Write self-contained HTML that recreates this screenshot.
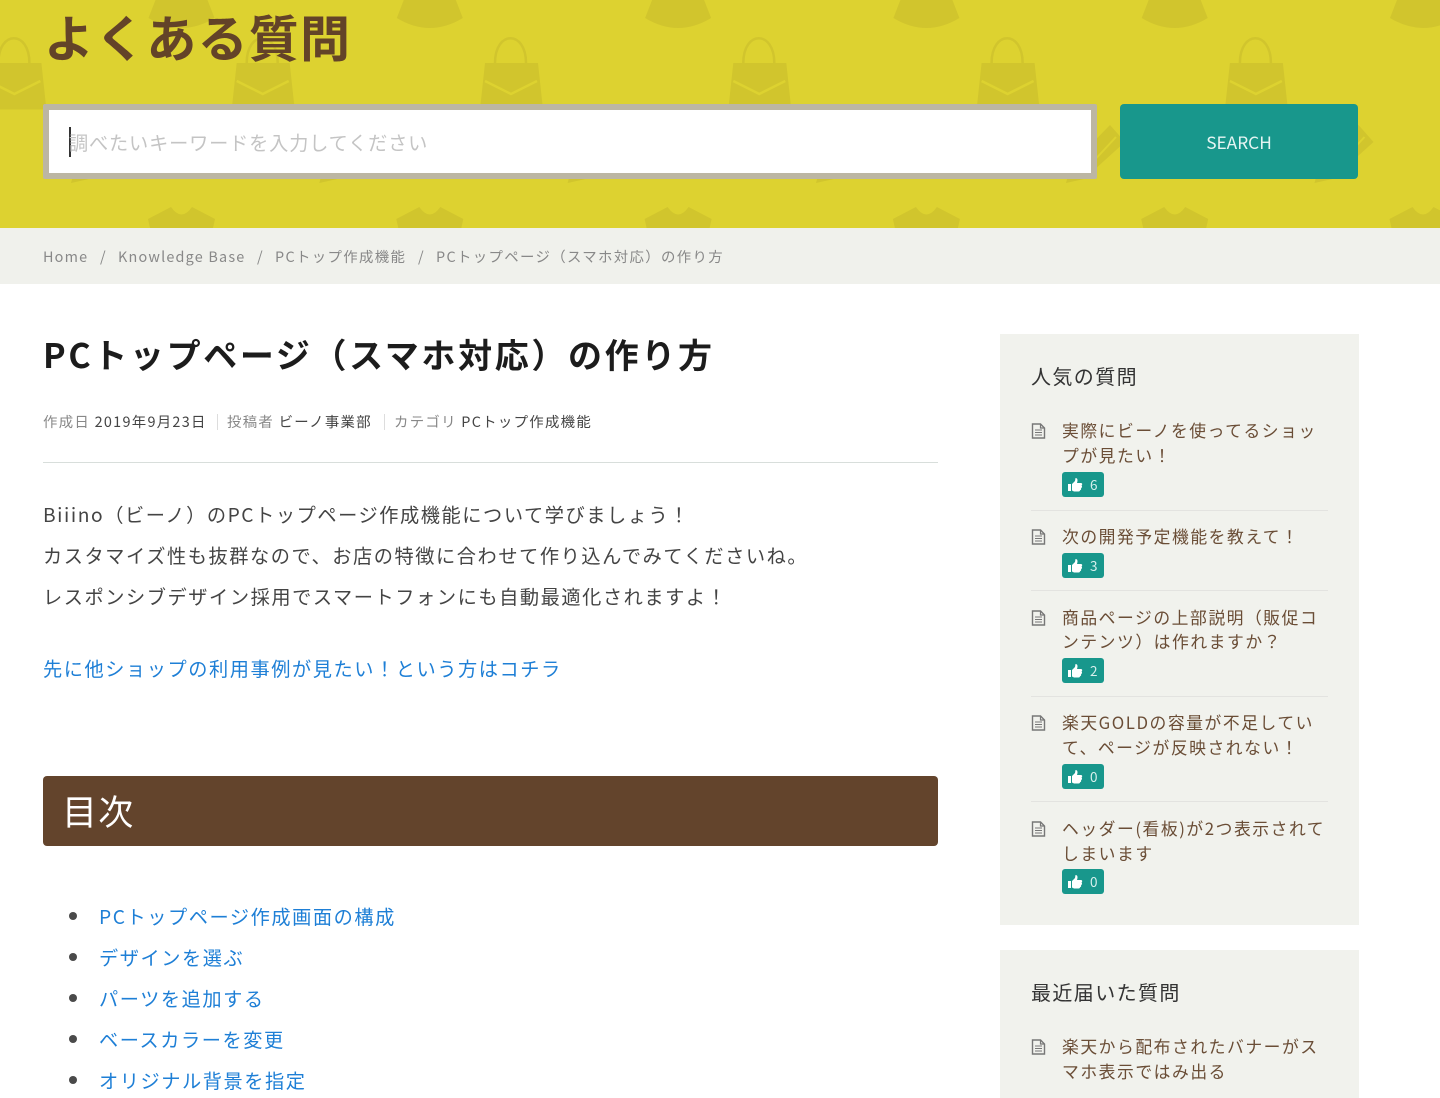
<!DOCTYPE html>
<html lang="ja"><head><meta charset="utf-8"><title>PCトップページ（スマホ対応）の作り方</title>
<style>
html,body{margin:0;padding:0;background:#fff}
body{width:1440px;height:1098px;overflow:hidden;position:relative;font-family:"Liberation Sans","Noto Sans CJK JP",sans-serif}
#w{position:absolute;left:0;top:0;width:1440px;height:1098px;overflow:hidden;filter:blur(.35px)}
.t{position:absolute;white-space:nowrap;font-family:"Noto Sans CJK JP",sans-serif;line-height:1.2}
.b{position:absolute}
.main{font-size:19.2px;letter-spacing:1.57px;color:#444}
.a{font-size:19.2px;letter-spacing:1.56px;color:#1e7fd6}
.q{font-size:16.8px;letter-spacing:1.55px;color:#6a4d36}
.meta{font-size:14.4px;letter-spacing:1.3px;color:#888}
.meta span{color:#444}
.crumb{font-size:14.4px;letter-spacing:1.36px;color:#888}
.badge{position:absolute;left:1062px;width:42px;height:25px;background:#18978c;border-radius:3px;color:#d8f0ed;font:13.5px "Noto Sans CJK JP",sans-serif;line-height:24px}
.badge svg{position:absolute;left:6px;top:6px}
.badge i{position:absolute;left:28px;font-style:normal}
.doc{position:absolute;left:1031px}
.dot{position:absolute;left:69px;width:8px;height:8px;border-radius:50%;background:#4a4a4a}
.sep{position:absolute;width:1px;height:16px;background:#ddd;top:414px}
.hr{position:absolute;left:1031px;width:297px;height:1px;background:#e3e3e0}
</style></head><body><div id="w">

<svg class="b" style="left:0;top:0" width="1440" height="228" viewBox="0 0 1440 228" xmlns="http://www.w3.org/2000/svg">
<defs>
<g id="bag">
<path d="M-26 63H27L32 109.500H-31Z" fill="#d1c52d"/>
<path d="M-16 63C-16 30 15 30 15 63" fill="none" stroke="#d1c52d" stroke-width="2.5"/>
<path d="M-26 81L0 94L26 81" fill="none" stroke="#ddd230" stroke-width="2.5"/>
</g>
<g id="top">
<path d="M-26 0H26L33 18Q0 38 -33 18Z" fill="#d1c52d"/>
<path d="M-33.500 219L-10.500 207Q0 222 10.500 207L33.500 219L31.500 228H-31.500Z" fill="#d1c52d"/>
</g>
<g id="pen">
<path d="M0 0L15 17L-26 54L-44 58L-39 40Z" fill="#d1c52d"/>
<path d="M6 12L-20 40" fill="none" stroke="#ddd230" stroke-width="2"/>
</g>
</defs>
<rect width="1440" height="228" fill="#ddd230"/>
<use href="#bag" x="14.4"/><use href="#bag" x="262.700"/><use href="#bag" x="511"/><use href="#bag" x="759.300"/><use href="#bag" x="1007.600"/><use href="#bag" x="1255.900"/>
<use href="#top" x="181.500"/><use href="#top" x="429.800"/><use href="#top" x="678.100"/><use href="#top" x="926.400"/><use href="#top" x="1174.700"/><use href="#top" x="1423"/>
<use href="#pen" x="115" y="125"/><use href="#pen" x="363.300" y="125"/><use href="#pen" x="611.600" y="125"/><use href="#pen" x="860" y="125"/><use href="#pen" x="1110" y="125"/><use href="#pen" x="1358.500" y="125"/>
</svg>

<div class="t" style="left:44px;top:6.500px;font-size:50px;font-weight:700;letter-spacing:1.2px;color:#634328;line-height:58px">よくある質問</div>

<div class="b" style="left:43px;top:104px;width:1042px;height:63px;border:6px solid #bcb6a3;background:#fff;border-radius:2px"></div>
<div class="b" style="left:69px;top:127px;width:2px;height:30px;background:#333"></div>
<div class="t" style="left:69px;top:130px;font-size:19.2px;letter-spacing:.83px;color:#c4c4c4;line-height:25px">調べたいキーワードを入力してください</div>

<div class="b" style="left:1120px;top:104px;width:238px;height:75px;background:#18978c;border-radius:4px"></div>
<div class="t" style="left:1120px;top:131px;width:238px;text-align:center;font-size:17.300px;color:#e6f5f3;line-height:22px">SEARCH</div>

<div class="b" style="left:0;top:228px;width:1440px;height:56px;background:#f0f1ec"></div>
<div class="t crumb" style="left:43px;top:248px;letter-spacing:1.2px">Home</div>
<div class="t crumb" style="left:100px;top:248px">/</div>
<div class="t crumb" style="left:118px;top:248px;letter-spacing:1.2px">Knowledge Base</div>
<div class="t crumb" style="left:257px;top:248px">/</div>
<div class="t crumb" style="left:275px;top:248px">PCトップ作成機能</div>
<div class="t crumb" style="left:418px;top:248px">/</div>
<div class="t crumb" style="left:436px;top:248px">PCトップページ（スマホ対応）の作り方</div>

<div class="t" style="left:43px;top:332px;font-size:34px;font-weight:700;letter-spacing:2.65px;color:#1c1c1c;line-height:44px">PCトップページ（スマホ対応）の作り方</div>

<div class="t meta" style="left:43px;top:413px">作成日 <span>2019年9月23日</span></div>
<div class="sep" style="left:217px"></div>
<div class="t meta" style="left:227px;top:413px">投稿者 <span>ビーノ事業部</span></div>
<div class="sep" style="left:384px"></div>
<div class="t meta" style="left:394px;top:413px">カテゴリ <span>PCトップ作成機能</span></div>
<div class="b" style="left:43px;top:462px;width:895px;height:1px;background:#d8dedb"></div>

<div class="t main" style="left:43px;top:503px">Biiino（ビーノ）のPCトップページ作成機能について学びましょう！</div>
<div class="t main" style="left:43px;top:544px">カスタマイズ性も抜群なので、お店の特徴に合わせて作り込んでみてくださいね。</div>
<div class="t main" style="left:43px;top:585px">レスポンシブデザイン採用でスマートフォンにも自動最適化されますよ！</div>
<div class="t a" style="left:43px;top:657px">先に他ショップの利用事例が見たい！という方はコチラ</div>

<div class="b" style="left:43px;top:776px;width:895px;height:70px;background:#63442c;border-radius:4px"></div>
<div class="t" style="left:62px;top:789px;font-size:35px;letter-spacing:1.2px;color:#fff;line-height:44px">目次</div>

<div class="dot" style="top:912px"></div><div class="t a" style="left:99px;top:904.500px">PCトップページ作成画面の構成</div>
<div class="dot" style="top:953px"></div><div class="t a" style="left:99px;top:945.500px">デザインを選ぶ</div>
<div class="dot" style="top:994px"></div><div class="t a" style="left:99px;top:986.500px">パーツを追加する</div>
<div class="dot" style="top:1035px"></div><div class="t a" style="left:99px;top:1027.500px">ベースカラーを変更</div>
<div class="dot" style="top:1076px"></div><div class="t a" style="left:99px;top:1068.500px">オリジナル背景を指定</div>

<div class="b" style="left:1000px;top:334px;width:359px;height:591px;background:#f1f2ed"></div>
<div class="b" style="left:1000px;top:950px;width:359px;height:148px;background:#f1f2ed"></div>
<div class="t" style="left:1031px;top:364px;font-size:20px;letter-spacing:1.4px;color:#333;line-height:24px">人気の質問</div>
<div class="t" style="left:1031px;top:980px;font-size:20px;letter-spacing:1.4px;color:#333;line-height:24px">最近届いた質問</div>

<svg width="0" height="0" style="position:absolute"><defs>
<g id="d"><path d="M1.500 1H9.500L13.500 5V15H1.500Z" fill="none" stroke="#777" stroke-width="1.4"/><path d="M9.500 1V5H13.500" fill="none" stroke="#777" stroke-width="1.2"/><path d="M4 7H11M4 9.500H11M4 12H11" stroke="#777" stroke-width="1.1"/></g>
<g id="u"><path d="M0 6H3V13H0Z" fill="#fff"/><path d="M4 6L7 3L7.500 0C9.500 0 10 2 9 5H13C14.500 5 14.500 7 13.500 7.500C14.500 8.500 14 10 13 10C13.500 11 13 12 12 12.300C12 13 11.500 13.500 10.500 13.500H6L4 12.500Z" fill="#fff"/></g>
</defs></svg>

<svg class="doc" style="top:423px" width="15" height="16"><use href="#d"/></svg>
<div class="t q" style="left:1062px;top:420px">実際にビーノを使ってるショッ</div>
<div class="t q" style="left:1062px;top:444.500px">プが見たい！</div>
<div class="badge" style="top:472px"><svg width="15" height="14"><use href="#u"/></svg><i>6</i></div>
<div class="hr" style="top:510px"></div>

<svg class="doc" style="top:529px" width="15" height="16"><use href="#d"/></svg>
<div class="t q" style="left:1062px;top:525.500px">次の開発予定機能を教えて！</div>
<div class="badge" style="top:553px"><svg width="15" height="14"><use href="#u"/></svg><i>3</i></div>
<div class="hr" style="top:590px"></div>

<svg class="doc" style="top:610px" width="15" height="16"><use href="#d"/></svg>
<div class="t q" style="left:1062px;top:606.500px">商品ページの上部説明（販促コ</div>
<div class="t q" style="left:1062px;top:631px">ンテンツ）は作れますか？</div>
<div class="badge" style="top:658px"><svg width="15" height="14"><use href="#u"/></svg><i>2</i></div>
<div class="hr" style="top:696px"></div>

<svg class="doc" style="top:715px" width="15" height="16"><use href="#d"/></svg>
<div class="t q" style="left:1062px;top:712px">楽天GOLDの容量が不足してい</div>
<div class="t q" style="left:1062px;top:736.500px">て、ページが反映されない！</div>
<div class="badge" style="top:764px"><svg width="15" height="14"><use href="#u"/></svg><i>0</i></div>
<div class="hr" style="top:801px"></div>

<svg class="doc" style="top:821px" width="15" height="16"><use href="#d"/></svg>
<div class="t q" style="left:1062px;top:817.500px">ヘッダー(看板)が2つ表示されて</div>
<div class="t q" style="left:1062px;top:842.500px">しまいます</div>
<div class="badge" style="top:869px"><svg width="15" height="14"><use href="#u"/></svg><i>0</i></div>

<svg class="doc" style="top:1039px" width="15" height="16"><use href="#d"/></svg>
<div class="t q" style="left:1062px;top:1035.500px">楽天から配布されたバナーがス</div>
<div class="t q" style="left:1062px;top:1060.500px">マホ表示ではみ出る</div>

</div></body></html>
